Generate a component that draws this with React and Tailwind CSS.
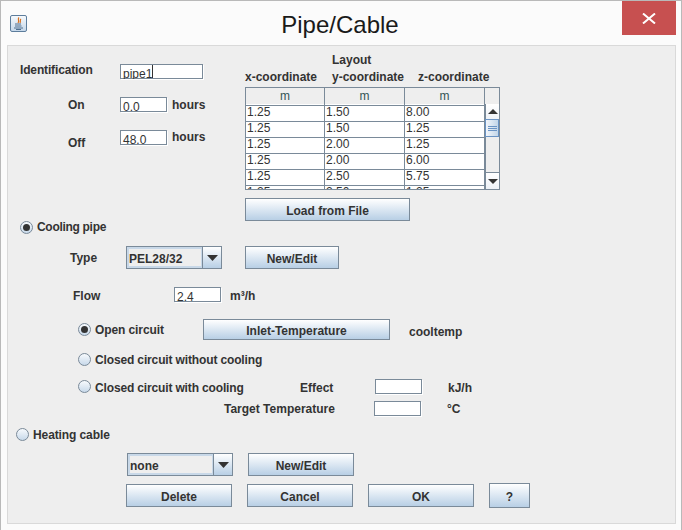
const font = { fontFamily: '"Liberation Sans", Arial, sans-serif' };

function Btn({ className, children }) {
  return (
    <div className={"flex items-center justify-center shrink-0 border border-[#7a8a99] bg-gradient-to-b from-[#ffffff] to-[#b8cfe5] pt-[2px] text-[12px] font-bold text-[#333333] " + className}>
      {children}
    </div>
  );
}

function Input({ className, children }) {
  return (
    <div className={"shrink-0 overflow-hidden border-t border-l border-[#7a8a99] bg-white pl-[2px] text-[12px] font-normal leading-[18px] text-[#333333] shadow-[inset_-1px_-1px_0_#7a8a99,1px_1px_0_#ffffff] " + className}>
      {children}
    </div>
  );
}

function Radio({ on, className }) {
  return (
    <div className={"flex h-[13px] w-[13px] shrink-0 items-center justify-center rounded-full border border-[#7a8a99] bg-gradient-to-b from-[#f7fafd] to-[#c8d9ea] " + (className || "")}>
      {on && <div className="h-[7px] w-[7px] rounded-full bg-[#333333]" />}
    </div>
  );
}

function Combo({ className, children }) {
  return (
    <div className={"flex shrink-0 border border-[#7a8a99] text-[12px] font-bold text-[#333333] " + className}>
      <div className="flex flex-1 items-center border-2 border-r-[1px] border-[#c8d8e8] bg-[#eeeeee] pt-[2px]">{children}</div>
      <div className="flex w-[19px] items-center justify-center border-l border-[#7a8a99] bg-gradient-to-b from-[#ffffff] to-[#b8cfe5]">
        <svg width="11" height="6" viewBox="0 0 11 6"><path d="M0 0h11L5.5 6z" fill="#333333" /></svg>
      </div>
    </div>
  );
}

const rows = [
  ["1.25", "1.50", "8.00"],
  ["1.25", "1.50", "1.25"],
  ["1.25", "2.00", "1.25"],
  ["1.25", "2.00", "6.00"],
  ["1.25", "2.50", "5.75"],
  ["1.25", "2.50", "1.25"],
];

function Table() {
  return (
    <div className="flex h-[103px] w-[255px] border border-[#7a8a99] bg-white font-normal">
      <div className="h-full w-[239px] overflow-hidden">
        <div className="grid h-[16px] grid-cols-[79px_80px_80px] bg-[#eeeeee] text-center text-[12px] leading-[17px] text-[#335555]">
          <div className="border-r border-b border-[#7a8a99]">m</div>
          <div className="border-r border-b border-[#7a8a99]">m</div>
          <div className="border-r border-b border-[#7a8a99]">m</div>
        </div>
        {rows.map((r, i) => (
          <div key={i} className="grid h-[16px] grid-cols-[79px_80px_80px] text-[12px] leading-[17px] text-[#333333]">
            {r.map((c, j) => (
              <div key={j} className="border-r border-b border-[#7a8a99] pl-[1px]">{c}</div>
            ))}
          </div>
        ))}
      </div>
      <div className="flex h-full flex-1 flex-col bg-[#eeeeee]">
        <div className="h-[16px]" />
        <div className="flex h-[15px] items-center justify-center border-l border-[#7a8a99] bg-gradient-to-b from-white to-[#eef2f7]">
          <svg width="10" height="5" viewBox="0 0 10 5"><path d="M5 0L10 5H0z" fill="#333333" /></svg>
        </div>
        <div className="flex h-[18px] flex-col items-center justify-center gap-[1px] border border-[#6b94c4] bg-gradient-to-r from-[#f2f6fb] to-[#c3d6e8]">
          <div className="h-px w-[9px] bg-[#6b94c4]" />
          <div className="h-px w-[9px] bg-[#6b94c4]" />
          <div className="h-px w-[9px] bg-[#6b94c4]" />
        </div>
        <div className="flex-1 border-l border-[#7a8a99]" />
        <div className="flex h-[17px] items-center justify-center border-t border-l border-[#7a8a99] bg-gradient-to-b from-white to-[#eef2f7]">
          <svg width="10" height="5" viewBox="0 0 10 5"><path d="M0 0h10L5 5z" fill="#333333" /></svg>
        </div>
      </div>
    </div>
  );
}

export default function App() {
  return (
    <div style={font} className="flex h-[530px] w-[682px] flex-col overflow-hidden border-t border-l border-r border-[#b9b9b9] bg-[#fbfbfb] text-[12px] font-bold text-[#333333]">
      <div className="flex h-[44px] shrink-0 items-start">
        <div className="ml-[9px] mt-[14px] flex h-[17px] w-[17px] items-center justify-center rounded-[2px] border border-[#5d7d9c] bg-gradient-to-b from-[#f6f9fc] to-[#c6d8ea]">
          <svg width="13" height="13" viewBox="0 0 13 13" fill="none">
            <path d="M7 0.5C5 2.5 8 3.5 6 6M9 2C7.5 3 9 4.5 8 6" stroke="#d9701e" strokeWidth="1.2" />
            <path d="M3 7h6M3 9h6.5M2 11h9M4 12.5h5" stroke="#4f6f8f" strokeWidth="1" />
          </svg>
        </div>
        <div className="flex-1 pl-[31px] pt-[8px] text-center text-[24px] font-normal leading-[32px] text-[#1a1a1a]">Pipe/Cable</div>
        <div className="mr-[5px] flex h-[34px] w-[54px] shrink-0 items-center justify-center bg-[#c75050]">
          <svg width="14" height="11" viewBox="0 0 14 11" fill="none"><path d="M1 0.5L13 10.5M13 0.5L1 10.5" stroke="#ffffff" strokeWidth="2" /></svg>
        </div>
      </div>

      <div className="ml-[6px] flex h-[479px] w-[669px] shrink-0 flex-col border border-[#d9d9d9] bg-[#eeeeee]">
        <div className="flex h-[176px] shrink-0">
          <div className="w-[237px] shrink-0">
            <div className="flex h-[33px] items-end">
              <div className="ml-[12px] w-[100px] pb-[2px] leading-[14px] tracking-[-0.15px]">Identification</div>
              <Input className="h-[15px] w-[83px]">
                <span>pipe1</span><span className="inline-block h-[13px] w-px bg-[#333333] align-top" />
              </Input>
            </div>
            <div className="mt-[18px] flex h-[15px] items-center">
              <div className="ml-[60px] w-[52px]">On</div>
              <Input className="h-[15px] w-[47px]">0.0</Input>
              <div className="ml-[5px]">hours</div>
            </div>
            <div className="mt-[18px] flex h-[15px] items-start">
              <div className="ml-[60px] mt-[4px] w-[52px]">Off</div>
              <Input className="h-[15px] w-[47px]">48.0</Input>
              <div className="ml-[5px] leading-[15px]">hours</div>
            </div>
          </div>
          <div className="shrink-0">
            <div className="ml-[87px] mt-[7px] h-[15px] leading-[15px]">Layout</div>
            <div className="flex h-[19px] leading-[19px]">
              <div className="w-[87px]">x-coordinate</div>
              <div className="w-[86px]">y-coordinate</div>
              <div>z-coordinate</div>
            </div>
            <Table />
            <Btn className="mt-[8px] h-[23px] w-[165px]">Load from File</Btn>
          </div>
        </div>

        <div className="ml-[12px] mt-[-2px] flex h-[14px] items-center gap-[4px]">
          <Radio on />
          <span className="tracking-[-0.3px]">Cooling pipe</span>
        </div>

        <div className="mt-[12px] flex h-[23px] items-center">
          <div className="ml-[62px] w-[56px]">Type</div>
          <Combo className="h-[23px] w-[96px]">PEL28/32</Combo>
          <Btn className="ml-[23px] h-[23px] w-[94px]">New/Edit</Btn>
        </div>

        <div className="mt-[18px] flex h-[15px] items-center">
          <div className="ml-[65px] w-[101px] pt-[2px]">Flow</div>
          <Input className="h-[15px] w-[47px]">2.4</Input>
          <div className="ml-[9px] pt-[2px]">m³/h</div>
        </div>

        <div className="mt-[17px] flex h-[21px] items-center">
          <Radio on className="ml-[70px]" />
          <div className="ml-[4px] w-[108px] tracking-[-0.1px]">Open circuit</div>
          <Btn className="h-[21px] w-[187px]">Inlet-Temperature</Btn>
          <div className="ml-[19px] pt-[4px]">cooltemp</div>
        </div>

        <div className="mt-[12px] flex h-[14px] items-center">
          <Radio className="ml-[70px]" />
          <div className="ml-[4px] pt-[1px] tracking-[-0.14px]">Closed circuit without cooling</div>
        </div>

        <div className="mt-[13px] flex h-[15px] items-center">
          <Radio className="ml-[70px]" />
          <div className="ml-[4px] w-[205px] pt-[2px] tracking-[-0.15px]">Closed circuit with cooling</div>
          <div className="w-[75px] pt-[2px]">Effect</div>
          <Input className="h-[15px] w-[47px]" />
          <div className="ml-[26px] pt-[2px]">kJ/h</div>
        </div>

        <div className="mt-[7px] flex h-[15px] items-center">
          <div className="ml-[216px] w-[150px]">Target Temperature</div>
          <Input className="h-[15px] w-[47px]" />
          <div className="ml-[26px]">°C</div>
        </div>

        <div className="ml-[8px] mt-[11px] flex h-[14px] items-center gap-[4px]">
          <Radio />
          <span className="pt-[2px] tracking-[-0.1px]">Heating cable</span>
        </div>

        <div className="mt-[12px] flex h-[23px] items-center">
          <Combo className="ml-[119px] h-[23px] w-[106px]">none</Combo>
          <Btn className="ml-[15px] h-[23px] w-[106px]">New/Edit</Btn>
        </div>

        <div className="mt-[7px] flex h-[25px] items-center">
          <Btn className="ml-[118px] h-[23px] w-[106px]">Delete</Btn>
          <Btn className="ml-[15px] h-[23px] w-[106px]">Cancel</Btn>
          <Btn className="ml-[15px] h-[23px] w-[106px]">OK</Btn>
          <Btn className="ml-[15px] h-[25px] w-[41px]">?</Btn>
        </div>
      </div>
    </div>
  );
}
